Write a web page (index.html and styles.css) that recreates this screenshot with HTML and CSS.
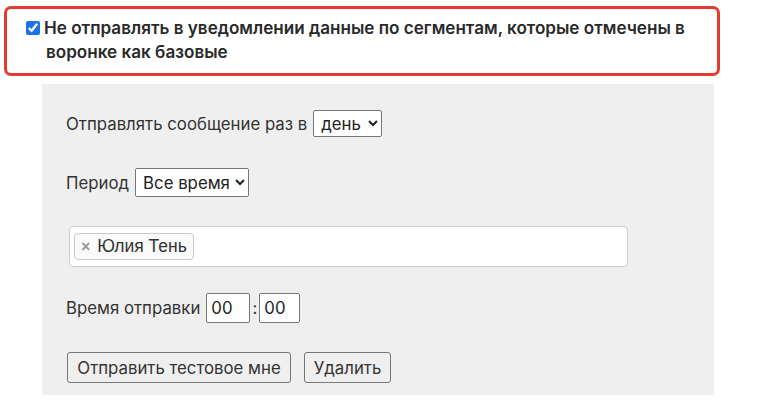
FILE: index.html
```html
<!DOCTYPE html>
<html lang="ru">
<head>
<meta charset="utf-8">
<link rel="stylesheet" href="styles.css">
</head>
<body>
<div class="notice">
  <label class="notice-label"><input type="checkbox" class="notice-check" checked>Не отправлять в уведомлении данные по сегментам, которые отмечены в воронке как базовые</label>
</div>
<div class="panel">
  <div class="row row-freq">
    <span class="lbl">Отправлять сообщение раз в</span>
    <select class="sel sel-day"><option>день</option></select>
  </div>
  <div class="row row-period">
    <span class="lbl">Период</span>
    <select class="sel sel-period"><option>Все время</option></select>
  </div>
  <div class="tags">
    <span class="tag"><span class="tag-x">×</span>Юлия Тень</span>
  </div>
  <div class="row row-time">
    <span class="lbl">Время отправки</span>
    <input class="time time-h" type="text" value="00">
    <span class="colon">:</span>
    <input class="time time-m" type="text" value="00">
  </div>
  <div class="row row-btns">
    <button class="btn btn-test">Отправить тестовое мне</button>
    <button class="btn btn-del">Удалить</button>
  </div>
</div>
</body>
</html>
```

FILE: styles.css
```css
html, body {
  margin: 0;
  padding: 0;
  background: #ffffff;
}
body {
  font-family: "Inter", "Noto Sans", sans-serif;
  color: #2e2e2e;
  width: 757px;
  height: 405px;
  overflow: hidden;
}
.notice {
  margin: 6px 0 0 4px;
  width: 710px;
  height: 64px;
  border: 3px solid #e33b2f;
  border-radius: 7px;
}
.notice-label {
  display: block;
  padding: 7px 10px 0 39px;
  font-size: 17.1px;
  font-weight: 600;
  line-height: 24px;
  color: #2a2a2a;
}
.notice-check {
  width: 14px;
  height: 14px;
  margin: 0 4px 0 -20px;
  vertical-align: -1px;
  accent-color: #1a73e8;
}
.panel {
  margin: 8px 0 0 42px;
  width: 648px;
  height: 285px;
  padding: 26px 0 0 24px;
  background: #efefef;
  display: flex;
  flex-direction: column;
  align-items: flex-start;
}
.row {
  display: flex;
  align-items: center;
  font-size: 16.8px;
  color: #333;
}
.lbl {
  margin-right: 6px;
}
.sel {
  font-family: "Inter", "Noto Sans", sans-serif;
  font-size: 16.8px;
  color: #222;
  background: #fff;
  border: 1px solid #767676;
  border-radius: 2px;
  padding: 0 0 0 3px;
  box-sizing: border-box;
}
.sel-day {
  width: 69px;
  height: 27px;
}
.row-period {
  margin-top: 31px;
}
.sel-period {
  width: 114px;
  height: 29px;
}
.tags {
  margin-top: 29px;
  margin-left: 3px;
  width: 559px;
  height: 41px;
  box-sizing: border-box;
  background: #fff;
  border: 1px solid #cfcfcf;
  border-radius: 4px;
  padding: 6px 4px;
  display: flex;
  align-items: flex-start;
}
.tag {
  display: inline-flex;
  align-items: center;
  height: 27px;
  box-sizing: border-box;
  border: 1px solid #c9c9c9;
  border-radius: 4px;
  background: #fafafa;
  padding: 0 6px 0 6px;
  font-family: "Liberation Sans", Arial, sans-serif;
  font-size: 17.5px;
  color: #333;
}
.tag-x {
  color: #999;
  font-weight: 700;
  font-size: 16px;
  margin-right: 7px;
}
.row-time {
  margin-top: 26px;
}
.time {
  font-family: "Inter", "Noto Sans", sans-serif;
  font-size: 16.8px;
  color: #222;
  height: 30px;
  box-sizing: border-box;
  border: 1px solid #767676;
  border-radius: 2px;
  background: #fff;
  padding: 0 4px;
  margin: 0;
}
.time-h {
  width: 44px;
}
.colon {
  margin: 0 2px;
  width: 5px;
  text-align: center;
}
.time-m {
  width: 41px;
}
.row-btns {
  margin-top: 29px;
  margin-left: 1px;
}
.btn {
  font-family: "Inter", "Noto Sans", sans-serif;
  font-size: 16.8px;
  color: #333;
  background: #efefef;
  border: 1px solid #767676;
  border-radius: 3px;
  height: 31px;
  box-sizing: border-box;
  padding: 0 6px;
  margin: 0;
}
.btn-test {
  width: 224px;
}
.btn-del {
  width: 87px;
  margin-left: 13px;
}
```
